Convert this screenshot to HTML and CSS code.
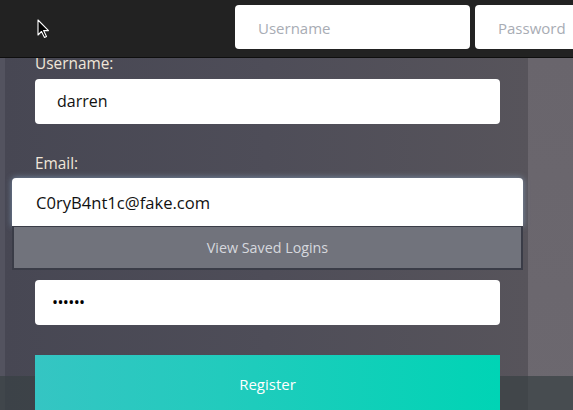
FILE: index.html
```html
<!DOCTYPE html>
<html>
<head>
<meta charset="utf-8">
<link rel="stylesheet" href="styles.css">
</head>
<body>
<header class="topbar">
  <svg class="cursor" width="14" height="20" viewBox="0 0 14 20">
    <path d="M1 1 L1 16 L4.5 12.5 L7.5 18.5 L9.5 17.5 L6.6 11.6 L11.5 11.6 Z" fill="#000" stroke="#fff" stroke-width="1.1" stroke-linejoin="round"/>
  </svg>
  <div class="login">
    <div class="top-input">Username</div>
    <div class="top-input">Password</div>
  </div>
</header>
<div class="stage">
  <div class="edge"></div>
  <main class="panel">
    <div class="label">Username:</div>
    <div class="field f-user">darren</div>
    <div class="label l-email">Email:</div>
    <div class="email-wrap">
      <div class="field email">C0ryB4nt1c@fake.com</div>
      <div class="saved">View Saved Logins</div>
    </div>
    <div class="field pass">••••••</div>
    <div class="register">Register</div>
  </main>
  <div class="side"></div>
  <div class="band"></div>
</div>
</body>
</html>
```
FILE: styles.css
```css
html, body {
  margin: 0;
  padding: 0;
  height: 410px;
  overflow: hidden;
  font-family: "Open Sans", "Noto Sans", sans-serif;
  background: #4d4c56;
}
.topbar {
  position: relative;
  z-index: 3;
  height: 57px;
  background: #222222;
  border-bottom: 1px solid #0e0e0e;
  box-sizing: content-box;
  overflow: hidden;
}
.cursor {
  position: absolute;
  left: 37px;
  top: 19px;
}
.login {
  display: flex;
  gap: 5px;
  padding: 5px 0 0 235px;
}
.top-input {
  flex: 0 0 235px;
  height: 44px;
  box-sizing: border-box;
  background: #fff;
  border-radius: 4px;
  padding-left: 23px;
  font-size: 15px;
  line-height: 47px;
  color: #a8acb4;
}
.stage {
  position: relative;
  display: flex;
  height: 352px;
}
.edge {
  width: 5px;
  background: #53535f;
}
.panel {
  position: relative;
  width: 523px;
  box-sizing: border-box;
  padding: 0 28px 0 30px;
  background: linear-gradient(90deg, #474753 0%, #4e4d58 50%, #57545b 100%);
}
.side {
  flex: 1;
  background: linear-gradient(180deg, #69656c, #6c686f);
}
.band {
  position: absolute;
  left: 0;
  right: 0;
  bottom: 0;
  height: 34px;
  background: rgba(56, 65, 67, 0.71);
  z-index: 1;
}
.label {
  font-size: 15.4px;
  line-height: 16px;
  color: #f0e6d8;
  margin-top: -2px;
}
.field {
  background: #fff;
  border-radius: 4px;
  height: 45px;
  box-sizing: border-box;
  padding-left: 22px;
  font-size: 16px;
  line-height: 45px;
  color: #111;
}
.f-user {
  margin-top: 7px;
}
.l-email {
  margin-top: 32px;
}
.email-wrap {
  margin: 6px -23px 0 -23px;
}
.email {
  height: 48px;
  line-height: 50px;
  padding-left: 24px;
  font-size: 16.6px;
  border-radius: 4px 4px 0 0;
  box-shadow: 0 0 6px rgba(160, 200, 240, 0.55);
}
.saved {
  height: 44px;
  box-sizing: border-box;
  background: #71737c;
  border: 2px solid #3a3c47;
  border-top-width: 1px;
  text-align: center;
  font-size: 14.3px;
  line-height: 42px;
  color: #d6d8de;
}
.pass {
  margin-top: 10px;
  padding-left: 17px;
  font-size: 16px;
  letter-spacing: -0.6px;
  color: #000;
}
.register {
  position: relative;
  z-index: 2;
  margin-top: 30px;
  height: 60px;
  background: linear-gradient(90deg, #35c5c3 0%, #22cbbd 40%, #00d4b5 100%);
  text-align: center;
  color: #fff;
  font-size: 15px;
  line-height: 58px;
}
```
